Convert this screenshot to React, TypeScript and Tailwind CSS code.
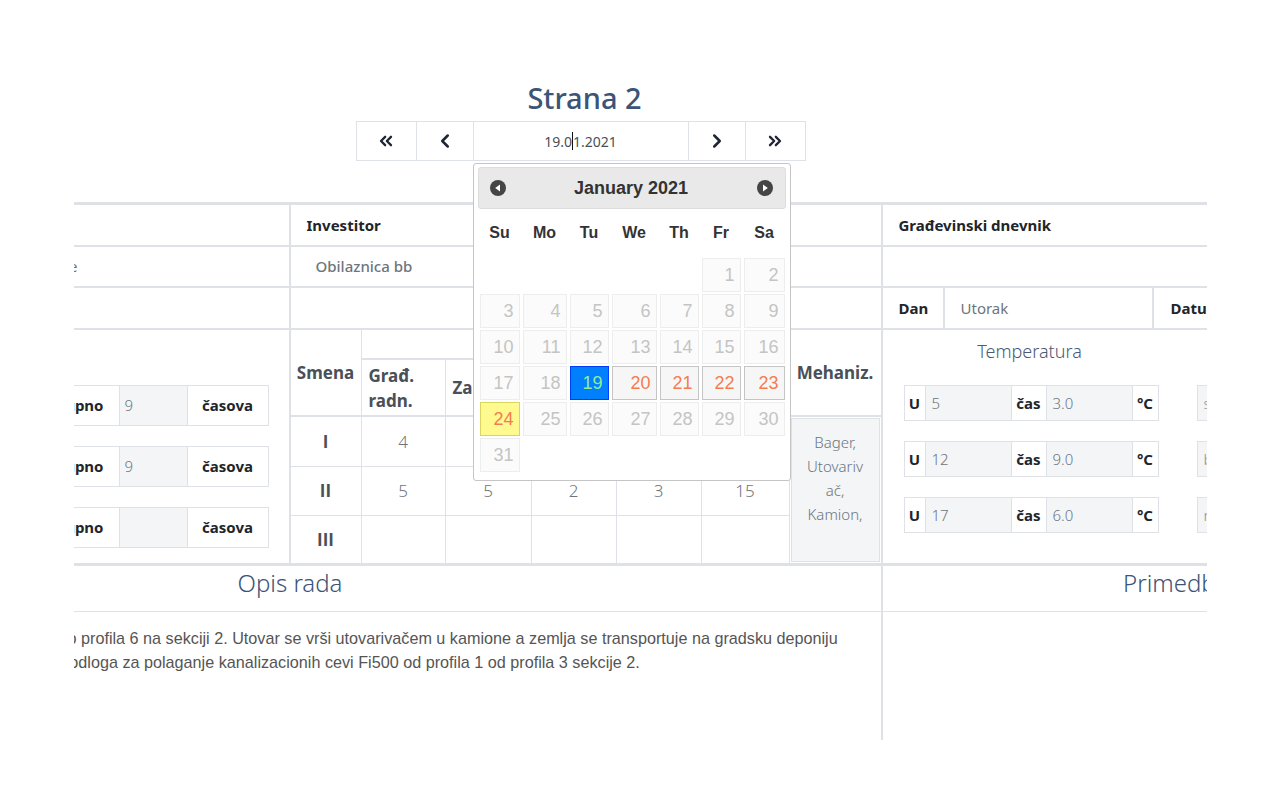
import { ChevronLeft, ChevronRight, ChevronsLeft, ChevronsRight } from "lucide-react";

type DayKind = "off" | "on" | "active" | "today";

const calCols = "grid-cols-[40px_44px_39px_45px_39px_39px_41px]";

const dayStyle: Record<DayKind, string> = {
  off: "border-[#ededed] bg-[#fbfbfb] text-[#c4c4c4]",
  on: "border-[#c5c5c5] bg-[#f6f6f6] text-[#f57c51]",
  active: "border-[#003eff] bg-[#007fff] text-[#90ee90]",
  today: "border-[#dad55e] bg-[#fffa90] text-[#f57c51]",
};

function kindOf(day: number): DayKind {
  if (day === 19) return "active";
  if (day === 24) return "today";
  if (day >= 20 && day <= 23) return "on";
  return "off";
}

function CircleArrow({ dir }: { dir: "prev" | "next" }) {
  return (
    <svg width="16" height="16" viewBox="0 0 16 16">
      <circle cx="8" cy="8" r="8" fill="#454545" />
      {dir === "prev" ? (
        <path d="M10 4.6 L5.2 8 L10 11.4 Z" fill="#fff" />
      ) : (
        <path d="M6 4.6 L10.8 8 L6 11.4 Z" fill="#fff" />
      )}
    </svg>
  );
}

function Calendar() {
  const cells: (number | null)[] = [
    ...Array(5).fill(null),
    ...Array.from({ length: 31 }, (_, i) => i + 1),
  ];
  const week = ["Su", "Mo", "Tu", "We", "Th", "Fr", "Sa"];

  return (
    <div className="absolute left-[-1px] top-[41px] z-10 w-[318px] rounded-[3px] border border-[#c5c5c5] bg-white px-[4px] pb-[8px] pt-[3px] font-['Liberation_Sans',Arial,sans-serif] text-[#333]">
      <div className="flex h-[42px] items-center justify-between rounded-[3px] border border-[#dddddd] bg-[#e9e9e9] pl-[11px] pr-[12px]">
        <CircleArrow dir="prev" />
        <span className="text-[18px] font-bold">January 2021</span>
        <CircleArrow dir="next" />
      </div>
      <div className={`ml-[2px] mt-[6px] grid h-[36px] items-center gap-x-[3px] ${calCols}`}>
        {week.map((w) => (
          <span key={w} className="text-center text-[16px] font-bold">
            {w}
          </span>
        ))}
      </div>
      <div className={`ml-[2px] mt-[7px] grid gap-x-[3px] gap-y-[2px] ${calCols}`}>
        {cells.map((d, i) =>
          d === null ? (
            <span key={i} className="h-[34px]" />
          ) : (
            <span
              key={i}
              className={`flex h-[34px] items-center justify-end border pr-[5px] text-[18px] ${dayStyle[kindOf(d)]}`}
            >
              {d}
            </span>
          )
        )}
      </div>
    </div>
  );
}

function DateNav() {
  const btn = "flex h-[40px] items-center justify-center border border-[#dee2e6] bg-white text-[#1f2533]";
  return (
    <div className="mt-[3px] flex justify-center pr-[8px]">
      <div className="flex">
        <button className={`${btn} w-[61px]`}>
          <ChevronsLeft size={20} strokeWidth={2.75} />
        </button>
        <button className={`${btn} -ml-px w-[58px]`}>
          <ChevronLeft size={22} strokeWidth={2.75} />
        </button>
        <div className="relative -ml-px flex h-[40px] w-[216px] items-center justify-center border border-[#dee2e6] text-[14px] text-[#495057]">
          19.0
          <span className="inline-block h-[18px] w-px bg-[#111]" />
          1.2021
          <Calendar />
        </div>
        <button className={`${btn} -ml-px w-[58px]`}>
          <ChevronRight size={22} strokeWidth={2.75} />
        </button>
        <button className={`${btn} -ml-px w-[61px]`}>
          <ChevronsRight size={20} strokeWidth={2.75} />
        </button>
      </div>
    </div>
  );
}

function HoursGroup({ value }: { value: string }) {
  return (
    <div className="flex h-[41px] text-[15px]">
      <span className="flex items-center border border-[#dee2e6] px-[15px] font-bold">Ukupno</span>
      <span className="flex w-[67px] items-center border-y border-[#dee2e6] bg-[#f4f5f7] px-[5px] font-light text-[#6c757d]">
        {value}
      </span>
      <span className="flex w-[82px] items-center justify-center border border-[#dee2e6] font-bold">časova</span>
    </div>
  );
}

function TempGroup({ hour, temp }: { hour: string; temp: string }) {
  return (
    <div className="flex h-[36px] w-[255px] text-[15px]">
      <span className="flex w-[22px] items-center justify-center border border-[#dee2e6] font-bold">U</span>
      <span className="flex w-[85px] items-center border-y border-[#dee2e6] bg-[#f4f5f7] pl-[6px] font-light text-[#6c757d]">
        {hour}
      </span>
      <span className="flex w-[36px] items-center justify-center border border-[#dee2e6] font-bold">čas</span>
      <span className="flex w-[85px] items-center border-y border-[#dee2e6] bg-[#f4f5f7] pl-[6px] font-light text-[#6c757d]">
        {temp}
      </span>
      <span className="flex w-[27px] items-center justify-center border border-[#dee2e6] font-bold">°C</span>
    </div>
  );
}

const shifts = [
  { name: "I", values: ["4", "2", "1", "3", "10"] },
  { name: "II", values: ["5", "5", "2", "3", "15"] },
  { name: "III", values: ["", "", "", "", ""] },
];

const workerHeads = ["Građ. radn.", "Zanatlije", "Pomoćni radn.", "Ostali radn.", "Ukupno radn."];

function WorkersTable() {
  const h = "border-[#dee2e6] text-[17px] font-bold text-[#495057]";
  return (
    <div className="grid h-full grid-cols-[71px_84px_86px_85px_85px_88px_91px] grid-rows-[30px_57px_50px_49px_47px]">
      <div className={`row-span-2 flex items-center justify-center border-b-2 border-r ${h}`}>Smena</div>
      <div className={`col-span-5 flex items-center justify-center border-b-2 border-r ${h}`}>Broj radnika</div>
      <div className={`row-span-2 flex items-center justify-center border-b-2 ${h}`}>Mehaniz.</div>
      {workerHeads.map((t) => (
        <div key={t} className={`flex items-center border-b-2 border-r pl-[7px] leading-[25px] ${h}`}>
          {t}
        </div>
      ))}
      {shifts.map((s, r) => (
        <div key={s.name} className="contents">
          <div
            className={`flex items-center justify-center border-r font-['Open_Sans',sans-serif] ${r < 2 ? "border-b" : ""} ${h}`}
          >
            {s.name}
          </div>
          {s.values.map((v, i) => (
            <div
              key={i}
              className={`flex items-center justify-center border-r border-[#dee2e6] text-[17px] font-light text-[#6c757d] ${
                r < 2 ? "border-b" : ""
              }`}
            >
              {v}
            </div>
          ))}
        </div>
      ))}
      <div className="col-start-7 row-span-3 row-start-3 p-px">
        <div className="h-full border border-[#dee2e6] bg-[#f4f5f7] pt-[11px] text-center text-[15px] font-light leading-[24px] text-[#6c757d]">
          <span className="block">Bager,</span>
          <span className="block">Utovariv</span>
          <span className="block">ač,</span>
          <span className="block">Kamion,</span>
        </div>
      </div>
    </div>
  );
}

function Journal() {
  const b = "border-[#dee2e6]";
  return (
    <div className={`mt-[41px] border-t-[3px] text-[15px] ${b}`}>
      <div className={`grid h-[42px] grid-cols-[591px_592px_587px] border-b-2 ${b}`}>
        <div className={`flex items-center border-r-2 pl-[16px] font-bold ${b}`}>Izvođač radova</div>
        <div className={`flex items-center border-r-2 pl-[16px] font-bold ${b}`}>Investitor</div>
        <div className="flex items-center pl-[16px] font-bold">Građevinski dnevnik</div>
      </div>

      <div className={`grid h-[41px] grid-cols-[591px_592px_587px] border-b-2 ${b}`}>
        <div className={`flex items-center border-r-2 pl-[16px] ${b}`}>
          <span className="w-[362px] whitespace-nowrap text-right text-[#6c757d]">Izgradnja kanalizacione mreže</span>
        </div>
        <div className={`flex items-center border-r-2 pl-[25px] font-medium text-[#6c757d] ${b}`}>Obilaznica bb</div>
        <div />
      </div>

      <div className={`grid h-[42px] grid-cols-[591px_592px_587px] border-b-2 ${b}`}>
        <div className={`border-r-2 ${b}`} />
        <div className={`border-r-2 ${b}`} />
        <div className="flex">
          <div className={`flex w-[62px] items-center border-r-2 pl-[16px] font-bold ${b}`}>Dan</div>
          <div className={`flex w-[209px] items-center border-r-2 pl-[16px] text-[#6c757d] ${b}`}>Utorak</div>
          <div className={`flex w-[100px] items-center border-r-2 pl-[17px] font-bold ${b}`}>Datum</div>
          <div className="flex flex-1 items-center pl-[16px] text-[#6c757d]">19.01.2021</div>
        </div>
      </div>

      <div className={`grid h-[236px] grid-cols-[591px_592px_587px] border-b-[3px] ${b}`}>
        <div className={`flex flex-col items-end gap-[20px] border-r-2 pr-[20px] pt-[55px] ${b}`}>
          <HoursGroup value="9" />
          <HoursGroup value="9" />
          <HoursGroup value="" />
        </div>
        <div className={`border-r-2 ${b}`}>
          <WorkersTable />
        </div>
        <div className="flex">
          <div className="w-[294px] shrink-0 px-[21px]">
            <div className="pt-[8px] text-center text-[18px] font-light leading-[26px] text-[#4a5a78]">Temperatura</div>
            <div className="mt-[21px] flex flex-col gap-[20px]">
              <TempGroup hour="5" temp="3.0" />
              <TempGroup hour="12" temp="9.0" />
              <TempGroup hour="17" temp="6.0" />
            </div>
          </div>
          <div className="w-[293px] shrink-0 pl-[20px] pr-[21px]">
            <div className="pt-[8px] text-center text-[18px] font-light leading-[26px] text-[#4a5a78]">Vremenski uslovi</div>
            <div className="mt-[21px] flex flex-col gap-[20px]">
              {["sunčano", "bez padavina", "razvedreno"].map((v) => (
                <div
                  key={v}
                  className={`flex h-[36px] items-center border bg-[#f4f5f7] px-[6px] text-[15px] font-light text-[#8a9099] ${b}`}
                >
                  {v}
                </div>
              ))}
            </div>
          </div>
        </div>
      </div>

      <div className={`grid h-[46px] grid-cols-[1183px_587px] border-b ${b}`}>
        <div className={`border-r-2 text-center text-[24px] font-light leading-[34px] text-[#3b5477] ${b}`}>Opis rada</div>
        <div className="text-center text-[24px] font-light leading-[34px] text-[#3b5477]">Primedbe</div>
      </div>

      <div className="grid h-[128px] grid-cols-[1183px_587px]">
        <div
          className={`border-r-2 pl-[359px] pt-[14px] font-['Liberation_Sans',Arial,sans-serif] text-[16.2px] leading-[24px] text-[#555] ${b}`}
        >
          <p className="whitespace-nowrap">
            do profila 6 na sekciji 2. Utovar se vrši utovarivačem u kamione a zemlja se transportuje na gradsku deponiju
          </p>
          <p className="whitespace-nowrap">
            Podloga za polaganje kanalizacionih cevi Fi500 od profila 1 od profila 3 sekcije 2.
          </p>
        </div>
        <div />
      </div>
    </div>
  );
}

export default function App() {
  return (
    <div className="min-h-[800px] bg-white font-['Noto_Sans',sans-serif] text-[#212529]">
      <div className="mx-auto w-[1133px] overflow-hidden">
        <div className="relative ml-[-374px] w-[1770px] pb-[60px] pt-[78px]">
          <h1 className="h-[40px] text-center text-[29px] font-medium leading-[40px] text-[#3b5477]">Strana 2</h1>
          <DateNav />
          <Journal />
        </div>
      </div>
    </div>
  );
}
